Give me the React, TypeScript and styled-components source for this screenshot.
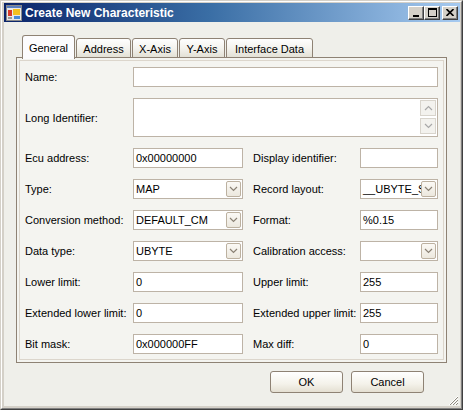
import React from "react";
import styled, { createGlobalStyle } from "styled-components";

const GlobalStyle = createGlobalStyle`
  html, body {
    margin: 0;
    padding: 0;
    background: #d4d0c8;
  }
  body {
    font-family: "Liberation Sans", Arial, sans-serif;
    font-size: 11px;
    color: #000;
  }
`;

const Window = styled.div`
  width: 463px;
  height: 410px;
  box-sizing: border-box;
  border: 1px solid;
  border-color: #d4d0c8 #404040 #404040 #d4d0c8;
  display: flex;
  flex-direction: column;
`;

const Frame = styled.div`
  flex: 1;
  display: flex;
  flex-direction: column;
  border: 1px solid;
  border-color: #ffffff #808080 #808080 #ffffff;
  padding: 1px 1px 2px 2px;
  background: #d4d0c8;
  min-height: 0;
`;

const TitleBar = styled.div`
  height: 19px;
  display: flex;
  align-items: center;
  padding: 0 2px 0 2px;
  background: linear-gradient(90deg, #0a246a 0%, #3a6ea5 45%, #a6caf0 100%);
  color: #fff;
`;

const TitleText = styled.span`
  flex: 1;
  margin-left: 3px;
  font-weight: bold;
  font-size: 12px;
  white-space: nowrap;
`;

const CaptionButton = styled.button<{ $gap?: number }>`
  width: 16px;
  height: 14px;
  margin-left: ${(p) => p.$gap ?? 0}px;
  padding: 0;
  box-sizing: border-box;
  background: #d4d0c8;
  border: 1px solid;
  border-color: #ffffff #404040 #404040 #ffffff;
  box-shadow: inset -1px -1px 0 #808080;
  display: flex;
  align-items: center;
  justify-content: center;
`;

const Body = styled.div`
  flex: 1;
  background: #efefea;
  display: flex;
  flex-direction: column;
  padding: 12px 0 0 12px;
  position: relative;
`;

const TabStrip = styled.div`
  display: flex;
  align-items: flex-end;
  height: 24px;
  padding-left: 6px;
  gap: 1px;
  position: relative;
  z-index: 1;
`;

const Tab = styled.div<{ $active?: boolean; $w: number }>`
  width: ${(p) => p.$w}px;
  height: ${(p) => (p.$active ? 24 : 20)}px;
  box-sizing: border-box;
  border: 1px solid #8e8274;
  border-bottom: ${(p) => (p.$active ? "none" : "1px solid #8e8274")};
  border-radius: 3px 3px 0 0;
  background: ${(p) =>
    p.$active
      ? "#fcfcfe"
      : "linear-gradient(180deg, #fefefe 0%, #f4f3ee 50%, #e3e1d6 100%)"};
  display: flex;
  align-items: center;
  justify-content: center;
  padding-top: ${(p) => (p.$active ? 0 : 1)}px;
  margin-bottom: ${(p) => (p.$active ? -1 : 0)}px;
`;

const Panel = styled.div`
  width: 431px;
  height: 306px;
  box-sizing: border-box;
  border: 1px solid #8e8274;
  background: #f4f4f0;
  padding: 2px;
  margin-top: -1px;
`;

const PanelInner = styled.div`
  height: 100%;
  box-sizing: border-box;
  border: 1px solid #dcd6cc;
  padding: 6px 0 0 5px;
  display: flex;
  flex-direction: column;
  gap: 11px;
`;

const Row = styled.div`
  display: flex;
  align-items: center;
`;

const Label = styled.span<{ $w: number }>`
  width: ${(p) => p.$w}px;
  flex: none;
  white-space: nowrap;
`;

const Field = styled.div<{ $w: number; $h?: number }>`
  width: ${(p) => p.$w}px;
  height: ${(p) => p.$h ?? 20}px;
  box-sizing: border-box;
  border: 1px solid #bdb3a6;
  background: #fff;
  display: flex;
  align-items: center;
  padding-left: 2px;
  position: relative;
  white-space: nowrap;
  overflow: hidden;
`;

const Gap = styled.div<{ $w: number }>`
  width: ${(p) => p.$w}px;
  flex: none;
`;

const DropButton = styled.div`
  position: absolute;
  right: 1px;
  top: 1px;
  width: 15px;
  height: 16px;
  box-sizing: border-box;
  border: 1px solid #bcb1a0;
  border-radius: 2px;
  background: linear-gradient(180deg, #fbf9f5 0%, #ece8de 100%);
  display: flex;
  align-items: center;
  justify-content: center;
`;

const ScrollButtons = styled.div`
  position: absolute;
  right: 1px;
  top: 1px;
  display: flex;
  flex-direction: column;
  gap: 2px;
`;

const ScrollButton = styled.div`
  width: 16px;
  height: 16px;
  box-sizing: border-box;
  border: 1px solid #d8d4cc;
  background: #f3f2ee;
  display: flex;
  align-items: center;
  justify-content: center;
`;

const Footer = styled.div`
  display: flex;
  justify-content: flex-end;
  gap: 8px;
  padding: 8px 36px 0 0;
`;

const Button = styled.button`
  width: 73px;
  height: 22px;
  box-sizing: border-box;
  border: 1px solid #8e8274;
  border-radius: 3px;
  background: linear-gradient(180deg, #ffffff 0%, #f4f2ea 60%, #e4dfd2 100%);
  font-family: "Liberation Sans", Arial, sans-serif;
  font-size: 11px;
  color: #000;
  padding: 0;
`;

const Grip = styled.svg`
  position: absolute;
  right: 1px;
  bottom: 0;
`;

const Chevron = ({ up, color = "#7c7c7c" }: { up?: boolean; color?: string }) => (
  <svg width="9" height="6" viewBox="0 0 9 6">
    <path
      d={up ? "M1 5 L4.5 1.5 L8 5" : "M1 1 L4.5 4.5 L8 1"}
      fill="none"
      stroke={color}
      strokeWidth="1.2"
    />
  </svg>
);

const AppIcon = () => (
  <svg width="16" height="16" viewBox="0 0 16 16">
    <rect x="0.5" y="0.5" width="15" height="15" fill="#e8e8e8" stroke="#8a8a8a" />
    <rect x="1" y="1" width="14" height="2" fill="#5a7fbf" />
    <rect x="2" y="5" width="4" height="6" fill="#d83a2a" />
    <rect x="7" y="4" width="7" height="6" fill="#f4c020" />
    <rect x="8" y="11" width="6" height="3" fill="#4a8ad8" />
    <rect x="2" y="12" width="4" height="2" fill="#9a9a9a" />
  </svg>
);

type FieldProps = { text?: string; combo?: boolean; w: number };
const Input = ({ text, combo, w }: FieldProps) => (
  <Field $w={w}>
    {text}
    {combo && (
      <DropButton>
        <Chevron color="#8a8174" />
      </DropButton>
    )}
  </Field>
);

const rows: [string, string, boolean, string, string, boolean][] = [
  ["Ecu address:", "0x00000000", false, "Display identifier:", "", false],
  ["Type:", "MAP", true, "Record layout:", "__UBYTE_S", true],
  ["Conversion method:", "DEFAULT_CM", true, "Format:", "%0.15", false],
  ["Data type:", "UBYTE", true, "Calibration access:", "", true],
  ["Lower limit:", "0", false, "Upper limit:", "255", false],
  ["Extended lower limit:", "0", false, "Extended upper limit:", "255", false],
  ["Bit mask:", "0x000000FF", false, "Max diff:", "0", false],
];

const tabs: [string, number][] = [
  ["General", 53],
  ["Address", 55],
  ["X-Axis", 46],
  ["Y-Axis", 46],
  ["Interface Data", 87],
];

export default function App() {
  return (
    <>
      <GlobalStyle />
      <Window>
        <Frame>
          <TitleBar>
            <AppIcon />
            <TitleText>Create New Characteristic</TitleText>
            <CaptionButton>
              <svg width="8" height="8" viewBox="0 0 8 8">
                <rect x="1" y="6" width="6" height="2" fill="#000" />
              </svg>
            </CaptionButton>
            <CaptionButton>
              <svg width="9" height="9" viewBox="0 0 9 9">
                <rect x="0.5" y="0.5" width="8" height="8" fill="none" stroke="#000" />
                <rect x="0" y="0" width="9" height="2" fill="#000" />
              </svg>
            </CaptionButton>
            <CaptionButton $gap={2}>
              <svg width="8" height="7" viewBox="0 0 8 7">
                <path d="M0.5 0 L7.5 7 M7.5 0 L0.5 7" stroke="#000" strokeWidth="1.6" />
              </svg>
            </CaptionButton>
          </TitleBar>
          <Body>
            <TabStrip>
              {tabs.map(([t, w], i) => (
                <Tab key={t} $w={w} $active={i === 0}>
                  {t}
                </Tab>
              ))}
            </TabStrip>
            <Panel>
              <PanelInner>
                <Row>
                  <Label $w={108}>Name:</Label>
                  <Field $w={305} />
                </Row>
                <Row>
                  <Label $w={108}>Long Identifier:</Label>
                  <Field $w={305} $h={39}>
                    <ScrollButtons>
                      <ScrollButton>
                        <Chevron up color="#a8a8a8" />
                      </ScrollButton>
                      <ScrollButton>
                        <Chevron color="#a8a8a8" />
                      </ScrollButton>
                    </ScrollButtons>
                  </Field>
                </Row>
                {rows.map(([l, v, c, rl, rv, rc]) => (
                  <Row key={l}>
                    <Label $w={108}>{l}</Label>
                    <Input text={v} combo={c} w={110} />
                    <Gap $w={10} />
                    <Label $w={107}>{rl}</Label>
                    <Input text={rv} combo={rc} w={78} />
                  </Row>
                ))}
              </PanelInner>
            </Panel>
            <Footer>
              <Button>OK</Button>
              <Button>Cancel</Button>
            </Footer>
            <Grip width="12" height="12" viewBox="0 0 12 12">
              <path d="M11 2 L2 11 M11 5 L5 11 M11 8 L8 11" stroke="#ffffff" strokeWidth="1" />
              <path d="M11 3 L3 11 M11 6 L6 11 M11 9 L9 11" stroke="#8e8a80" strokeWidth="1" />
            </Grip>
          </Body>
        </Frame>
      </Window>
    </>
  );
}
